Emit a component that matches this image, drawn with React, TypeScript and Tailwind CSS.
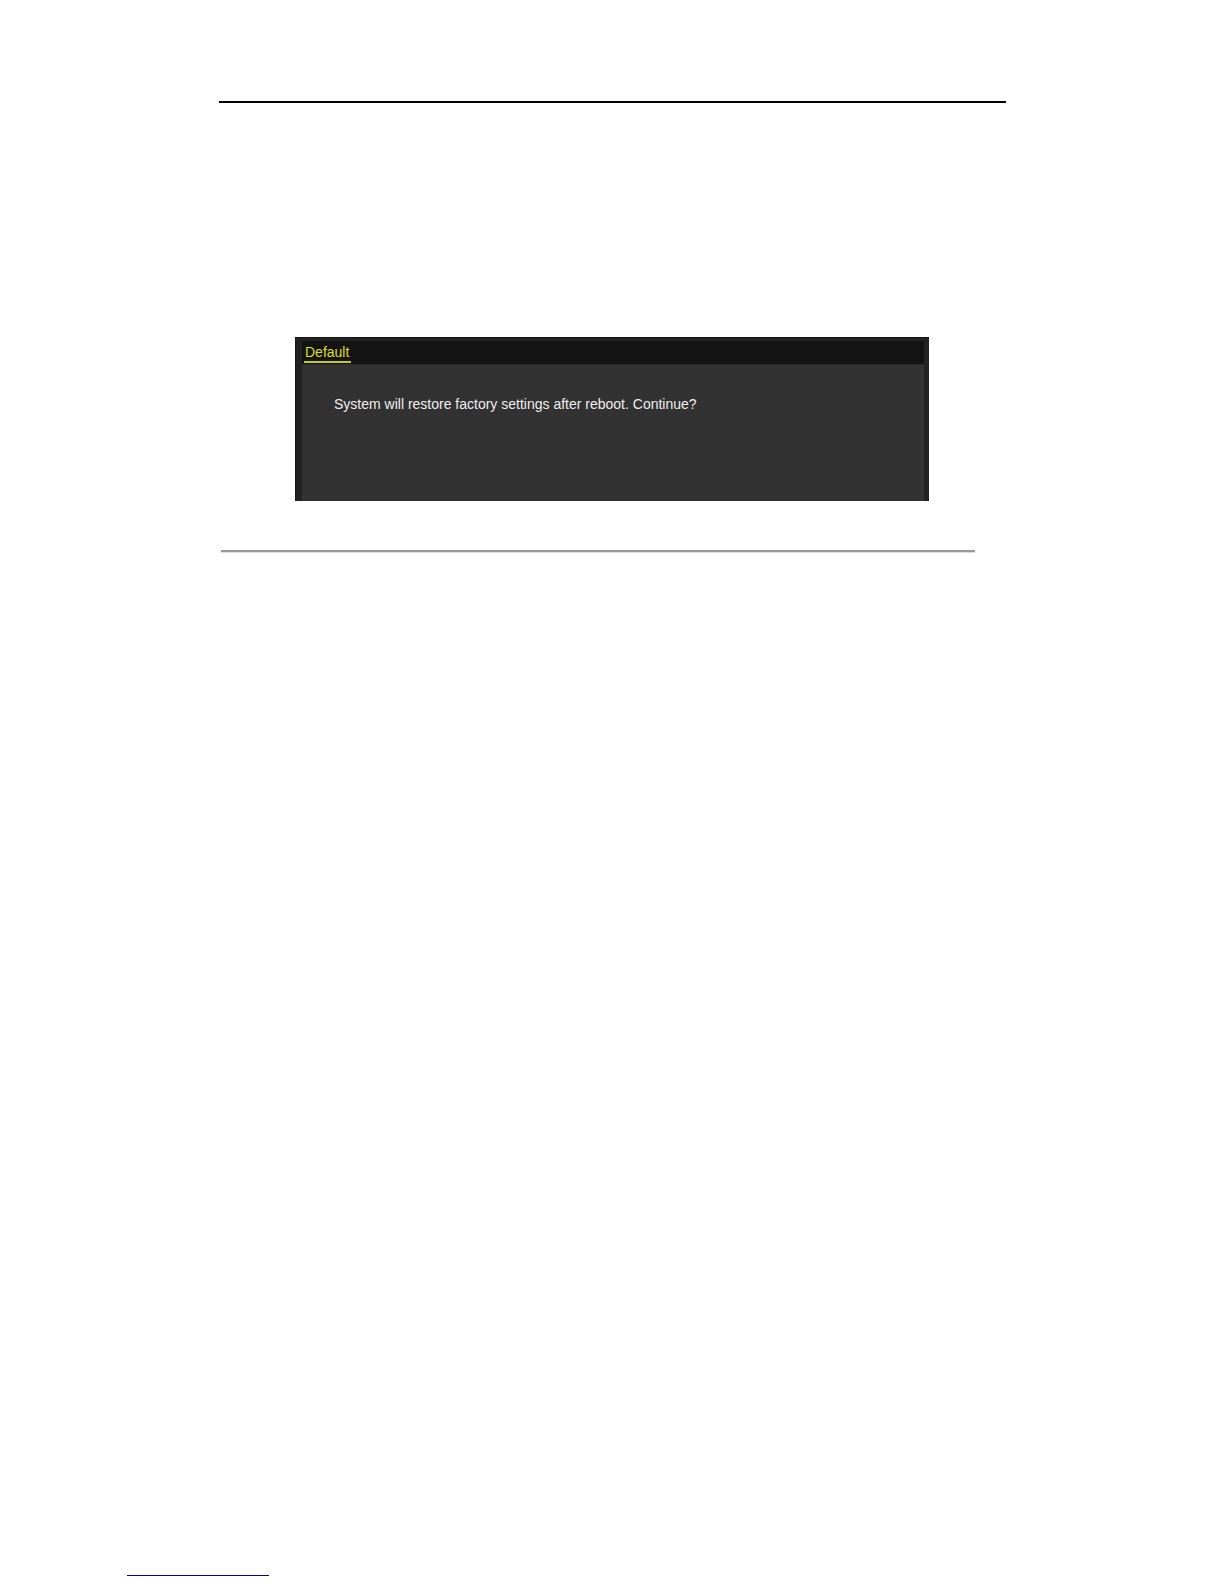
export default function App() {
  return (
    <main className="flex min-h-screen flex-col bg-white pt-[101px] pb-2 font-['Liberation_Sans',Arial,sans-serif] text-sm">
      <hr className="mr-[218px] ml-[219px] border-t-2 border-black" />

      <section
        aria-labelledby="default-tab"
        className="mx-[295px] mt-[234px] border-t border-l border-[#161616] bg-[#222222] pt-[3px] pr-[5px] pl-[6px]"
      >
        <div className="flex h-[23px] items-end bg-[#131313] pb-px pl-[2px]">
          <button
            id="default-tab"
            type="button"
            className="border-b-2 border-[#c9c910] pr-[2px] pl-px leading-[18px] text-[#dede18]"
          >
            Default
          </button>
        </div>
        <div className="min-h-[137px] border-t border-[#292929] bg-[#323232] px-8 pt-[29px]">
          <p className="leading-5 text-[#eeeeee]">
            System will restore factory settings after reboot. Continue?
          </p>
        </div>
      </section>

      <hr className="mr-[249px] ml-[221px] mt-[49px] h-[3px] border-t-2 border-b border-t-[#999999] border-b-[#dddddd]" />

      <footer className="mt-auto pl-[127px]">
        <hr className="w-[142px] border-t border-[#0000a8]" />
      </footer>
    </main>
  );
}
